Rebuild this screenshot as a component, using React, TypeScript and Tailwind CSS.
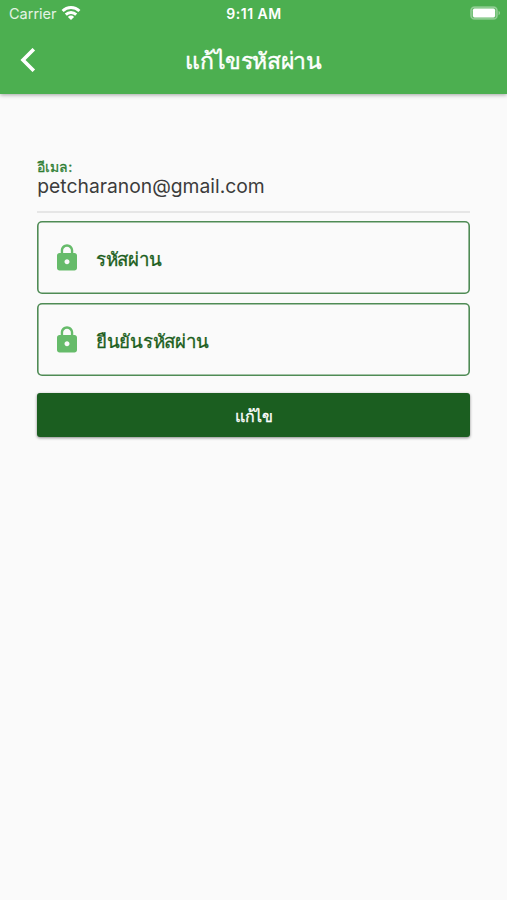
import type { ReactNode } from 'react';

function StatusBar() {
  return (
    <div className="grid h-7 grid-cols-3 items-center pl-[9px] pr-[6px] text-sm leading-none">
      <div className="flex items-center gap-[5px]">
        <span className="text-[14.5px] text-white/85">Carrier</span>
        <svg className="-ml-px -mt-[2px]" width="20" height="14" viewBox="0 0 20 14" fill="none" stroke="white" strokeWidth="2.9">
          <path d="M1.6 5a11.9 11.9 0 0 1 16.8 0" />
          <path d="M4.8 8.6a7.4 7.4 0 0 1 10.4 0" />
          <path d="M10 14 6.9 10.9a4.4 4.4 0 0 1 6.2 0z" fill="white" stroke="none" />
        </svg>
      </div>
      <span className="pr-[2px] text-center text-[14px] font-semibold tracking-[0.5px]">9:11 AM</span>
      <svg className="-mt-[2px] justify-self-end" width="31" height="14" viewBox="0 0 31 14">
        <rect x="0.9" y="0.9" width="26.2" height="12.2" rx="3.6" fill="white" fillOpacity="0.15" stroke="white" strokeOpacity="0.35" strokeWidth="1.5" />
        <rect x="2.9" y="2.6" width="22.2" height="8.8" rx="1.6" fill="white" />
        <path d="M28.6 4.8c1.8.8 1.8 3.6 0 4.4z" fill="white" fillOpacity="0.45" />
      </svg>
    </div>
  );
}

function Header({ title }: { title: string }) {
  return (
    <header className="relative h-[94px] bg-[#4caf50] text-white shadow-[0_1px_4px_rgba(0,0,0,0.35)]">
      <StatusBar />
      <div className="grid h-[64px] grid-cols-[56px_1fr_56px] items-center">
        <button type="button" aria-label="Back" className="pl-[20px]">
          <svg width="16" height="24" viewBox="0 0 16 24" fill="none" stroke="white" strokeWidth="3.6">
            <path d="M13.8 1.2 3 12l10.8 10.8" />
          </svg>
        </button>
        <h1 className="pt-[2px] text-center text-[23px] leading-8 tracking-[-0.35px] [-webkit-text-stroke:0.4px_currentColor]">
          {title}
        </h1>
      </div>
    </header>
  );
}

function LockIcon() {
  return (
    <svg width="30" height="30" viewBox="0 0 24 24" fill="#66bb6a">
      <path d="M18 8h-1V6c0-2.76-2.24-5-5-5S7 3.24 7 6v2H6c-1.1 0-2 .9-2 2v10c0 1.1.9 2 2 2h12c1.1 0 2-.9 2-2V10c0-1.1-.9-2-2-2zm-6 9c-1.1 0-2-.9-2-2s.9-2 2-2 2 .9 2 2-.9 2-2 2zm3.1-9H8.9V6c0-1.71 1.39-3.1 3.1-3.1 1.71 0 3.1 1.39 3.1 3.1v2z" />
    </svg>
  );
}

function Field({ children }: { children: ReactNode }) {
  return (
    <label className="flex h-[73px] items-center gap-[14px] rounded-[5px] pl-[14.5px] text-[#1b5e20] shadow-[inset_0_0_0_1.6px_#4f8b55]">
      <LockIcon />
      <span className="pt-[5px] text-[18.7px] leading-7 tracking-[-0.25px] [-webkit-text-stroke:0.3px_currentColor]">
        {children}
      </span>
    </label>
  );
}

export default function App() {
  return (
    <div className="min-h-screen bg-[#fafafa] font-['Inter',sans-serif]">
      <Header title="แก้ไขรหัสผ่าน" />

      <main className="flex flex-col pl-[37.3px] pr-[36.7px] pt-16">
        <div className="h-[55px] border-b-2 border-[#e6e6e6]">
          <div className="text-[14px] leading-[18px] text-[#2e7d32] [-webkit-text-stroke:0.3px_currentColor]">อีเมล:</div>
          <div className="text-[19.3px] leading-[20px] text-[#3c3c3c]">petcharanon@gmail.com</div>
        </div>

        <div className="mt-[8.4px] flex flex-col gap-[9px]">
          <Field>รหัสผ่าน</Field>
          <Field>ยืนยันรหัสผ่าน</Field>
        </div>

        <button
          type="button"
          className="mt-[16.6px] h-[44px] rounded-[3px] bg-[#1b5e20] pt-[3px] text-[16px] tracking-[-0.3px] text-white shadow-[0_1px_3px_rgba(0,0,0,0.45)] [-webkit-text-stroke:0.3px_currentColor]"
        >
          แก้ไข
        </button>
      </main>
    </div>
  );
}
